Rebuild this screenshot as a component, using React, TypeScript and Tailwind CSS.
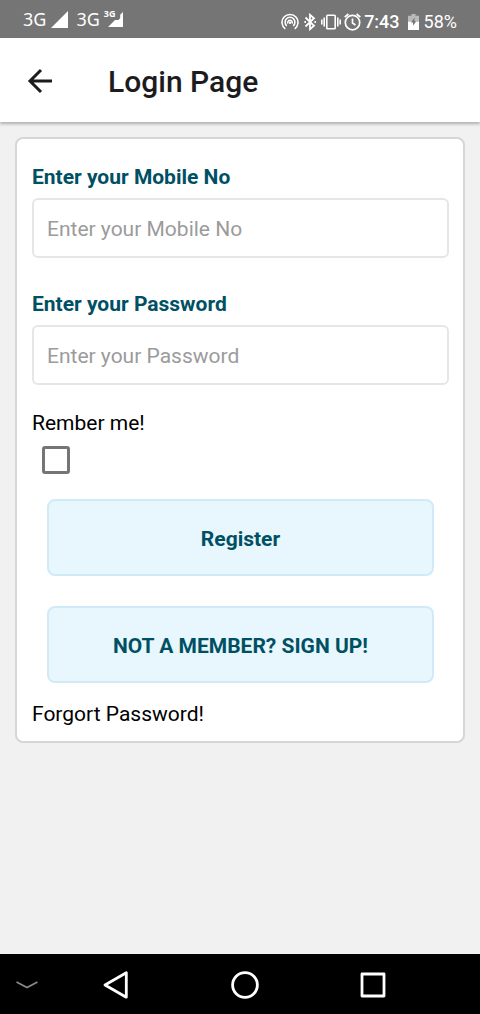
import React from "react";

function StatusBar() {
  return (
    <div className="flex h-[38px] items-center justify-between bg-[#757575] px-[23px] text-white">
      <div className="flex items-center font-['Noto_Sans',sans-serif] text-[18px] leading-6">
        <span>3G</span>
        <svg className="ml-[5px] size-[17px]" viewBox="0 0 17 17" fill="currentColor" aria-hidden="true">
          <path d="M17 0V17H0Z" />
        </svg>
        <span className="ml-2">3G</span>
        <div className="relative ml-[7px] h-[18px] w-4">
          <svg className="h-[18px] w-4" viewBox="0 0 16 18" fill="currentColor" aria-hidden="true">
            <path d="M16 2V17H1L8 10H11.5L13.2 8V4.8Z" />
          </svg>
          <span className="absolute -left-[3px] -top-px text-[9px] font-bold leading-[10px]">3G</span>
        </div>
      </div>
      <div className="flex items-center pt-[6px] font-[Roboto,sans-serif] text-[18px] leading-6">
        <svg className="size-[18px]" viewBox="0 0 18 18" fill="none" stroke="currentColor" strokeWidth="1.6" aria-hidden="true">
          <path d="M4.3 15.9A8 8 0 1 1 13.7 15.9" />
          <path d="M5.8 12.9A4.9 4.9 0 1 1 12.2 12.9" />
          <path d="M6.9 10.5A2.3 2.3 0 1 1 11.1 10.5" />
          <circle cx="9" cy="9.8" r="1.2" fill="currentColor" stroke="none" />
        </svg>
        <svg className="ml-[3px] h-[18px] w-4" viewBox="0 0 16 18" fill="none" stroke="currentColor" strokeWidth="1.8" aria-hidden="true">
          <path d="M3.5 4.5L12 12.8L8 16.2V1.8L12 5.2L3.5 13.5" />
          <path d="M2.4 8.1H4V9.9H2.4ZM12.4 8.1H14V9.9H12.4Z" fill="currentColor" stroke="none" />
        </svg>
        <svg className="ml-[3px] h-[18px] w-5" viewBox="0 0 20 18" fill="none" stroke="currentColor" strokeWidth="1.6" aria-hidden="true">
          <rect x="5.8" y="2.3" width="8.4" height="13.4" rx="0.8" />
          <path d="M3.2 4.5V13.5M0.8 6.5V11.5M16.8 4.5V13.5M19.2 6.5V11.5" />
        </svg>
        <svg className="ml-[3px] h-[18px] w-[17px]" viewBox="0 0 17 18" fill="none" stroke="currentColor" strokeWidth="1.7" aria-hidden="true">
          <circle cx="8.5" cy="9.6" r="7.2" />
          <path d="M8.5 5.5V10L11.5 12M0.7 4.2L4.4 1M16.3 4.2L12.6 1" />
        </svg>
        <span className="ml-[3px] font-medium">7:43</span>
        <svg className="ml-2 h-4 w-[11px]" viewBox="0 0 11 16" fill="currentColor" aria-hidden="true">
          <path d="M3.5 0H7.5V1.8H11V7.5H0V1.8H3.5Z" opacity="0.5" />
          <path d="M0 7.5H11V16H0Z" />
          <path d="M6.5 3.5L3 8.5H5V11.8L8.2 7.3H6.5Z" fill="#757575" />
        </svg>
        <span className="ml-[5px]">58%</span>
      </div>
    </div>
  );
}

function Header() {
  return (
    <header className="relative flex h-[84px] items-center bg-white pl-[27px] shadow-[0_2px_3px_rgba(0,0,0,0.28)]">
      <button type="button" aria-label="Back" className="pt-[2px] text-[#1c1c1e]">
        <svg className="size-[26px]" viewBox="0 0 26 26" fill="none" stroke="currentColor" strokeWidth="3" aria-hidden="true">
          <path d="M25 13H3.5M14 2L3 13L14 24" />
        </svg>
      </button>
      <h1 className="ml-[55px] pt-1 text-[30px] font-medium leading-10 text-[#1c1c1e]">Login Page</h1>
    </header>
  );
}

type FieldProps = { id: string; label: string; type: string };

function Field({ id, label, type }: FieldProps) {
  return (
    <div className="flex flex-col gap-[7px]">
      <label htmlFor={id} className="text-[21px] font-bold leading-7 text-[#005064]">
        {label}
      </label>
      <input
        id={id}
        type={type}
        placeholder={label}
        className="h-[60px] w-full rounded-md border-2 border-[#e6e6e6] bg-white px-[13px] pt-[2px] text-[21px] text-black outline-none placeholder:text-[#9b9b9b]"
      />
    </div>
  );
}

function ActionButton({ children }: { children: React.ReactNode }) {
  return (
    <button
      type="button"
      className="h-[77px] w-full rounded-lg border-2 border-[#d0eaf8] bg-[#e8f6fd] pt-1 text-[21px] font-bold text-[#005064]"
    >
      {children}
    </button>
  );
}

function NavigationBar() {
  return (
    <nav className="flex h-[60px] items-center bg-black pl-4 pt-[2px] text-white">
      <button type="button" aria-label="Hide navigation" className="text-[#8a8a8a]">
        <svg className="h-2 w-[22px]" viewBox="0 0 22 8" fill="none" stroke="currentColor" strokeWidth="1.6" aria-hidden="true">
          <path d="M0.5 1L11 6.5L21.5 1" />
        </svg>
      </button>
      <div className="ml-[65px] flex w-[283px] items-center justify-between">
        <button type="button" aria-label="Back">
          <svg className="h-7 w-[26px]" viewBox="0 0 26 28" fill="none" stroke="currentColor" strokeWidth="2.8" strokeLinejoin="round" aria-hidden="true">
            <path d="M23.3 1.8V26.2L2 14Z" />
          </svg>
        </button>
        <button type="button" aria-label="Home">
          <svg className="size-7" viewBox="0 0 28 28" fill="none" stroke="currentColor" strokeWidth="2.8" aria-hidden="true">
            <circle cx="14" cy="14" r="12.4" />
          </svg>
        </button>
        <button type="button" aria-label="Recent apps">
          <svg className="size-[26px]" viewBox="0 0 26 26" fill="none" stroke="currentColor" strokeWidth="2.8" strokeLinejoin="round" aria-hidden="true">
            <rect x="2" y="2" width="22" height="22" />
          </svg>
        </button>
      </div>
    </nav>
  );
}

export default function App() {
  return (
    <div className="flex min-h-screen flex-col bg-[#f1f1f1] font-[Roboto,sans-serif] text-[21px] text-black">
      <StatusBar />
      <Header />
      <main className="flex-1 p-[15px]">
        <form className="flex flex-col rounded-lg border-2 border-[#d6d6d6] bg-white pb-[13px] pl-[15px] pr-[14px] pt-6">
          <div className="flex flex-col gap-8">
            <Field id="mobile" label="Enter your Mobile No" type="tel" />
            <Field id="password" label="Enter your Password" type="password" />
          </div>
          <div className="mt-6 flex flex-col items-start gap-[9px]">
            <label htmlFor="remember" className="leading-7">
              Rember me!
            </label>
            <input
              id="remember"
              type="checkbox"
              className="ml-[10px] size-7 appearance-none rounded-[3px] border-3 border-[#757575] bg-white checked:bg-[#005064]"
            />
          </div>
          <div className="mt-[25px] flex flex-col gap-[30px] px-[15px]">
            <ActionButton>Register</ActionButton>
            <ActionButton>NOT A MEMBER? SIGN UP!</ActionButton>
          </div>
          <a href="#forgot" className="mt-[17px] self-start leading-7">
            Forgort Password!
          </a>
        </form>
      </main>
      <NavigationBar />
    </div>
  );
}
